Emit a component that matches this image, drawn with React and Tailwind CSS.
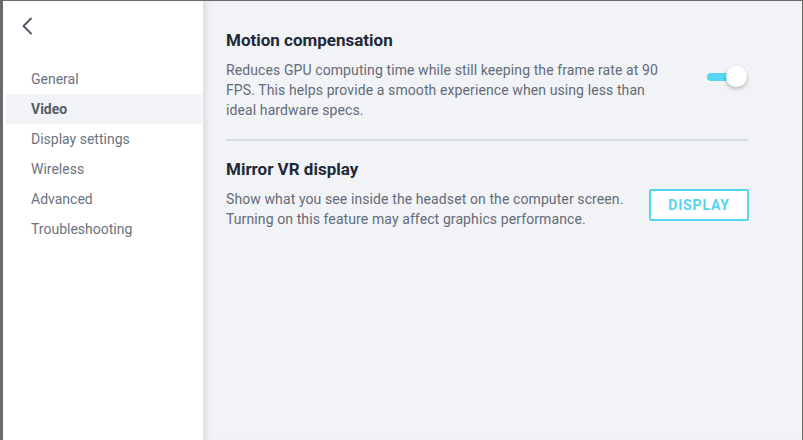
import React, { useState } from 'react';

const navItems = ['General', 'Video', 'Display settings', 'Wireless', 'Advanced', 'Troubleshooting'];

const App = () => {
  const [active, setActive] = useState('Video');
  const [motion, setMotion] = useState(true);

  return (
    <div
      className="flex h-[440px] w-[803px] overflow-hidden border-t border-r border-l-[3px] border-[#6a6a6a] bg-[#f2f3f7]"
      style={{ fontFamily: 'Roboto, "Liberation Sans", sans-serif' }}
    >
      {/* sidebar */}
      <div className="flex w-[200px] shrink-0 flex-col bg-white pl-[3px]">
        <button className="ml-[15px] mt-[15px] flex h-[20px] w-[14px] items-center text-[#4b5563]">
          <svg width="12" height="18" viewBox="0 0 12 18" fill="none">
            <path d="M10 1.5 L2.5 9 L10 16.5" stroke="currentColor" strokeWidth="1.8" strokeLinecap="round" strokeLinejoin="round" />
          </svg>
        </button>
        <nav className="mt-[28px] flex flex-col">
          {navItems.map((item) => (
            <button
              key={item}
              onClick={() => setActive(item)}
              className={`h-[30px] w-[196px] pl-[25px] text-left text-[14px] ${
                active === item ? 'bg-[#f2f3f7] font-bold text-[#555e68]' : 'text-[#6b7380]'
              }`}
            >
              {item}
            </button>
          ))}
        </nav>
      </div>

      {/* main */}
      <div className="relative flex-1 pl-[23px] pt-[27px] shadow-[inset_8px_0_8px_-6px_rgba(0,0,0,0.12)]">
        <div className="w-[522px]">
          <h2 className="text-[17px] font-bold leading-[25px] text-[#1f2937]">Motion compensation</h2>
          <div className="mt-[7px] flex items-start justify-between">
            <p className="w-[440px] text-[14px] leading-[20px] tracking-[0.1px] text-[#636b78]">
              Reduces GPU computing time while still keeping the frame rate at 90 FPS. This helps provide a smooth experience when using less than ideal hardware specs.
            </p>
            <button
              onClick={() => setMotion(!motion)}
              className="relative mr-[1px] mt-[6px] h-[22px] w-[40px]"
            >
              <span
                className={`absolute left-0 top-[7px] h-[8px] w-[30px] rounded-full ${
                  motion ? 'bg-[#55d6f2]' : 'bg-[#c9ced8]'
                }`}
              />
              <span
                className={`absolute top-0 h-[21px] w-[21px] rounded-full bg-white shadow-[0_2px_4px_rgba(0,0,0,0.25)] ${
                  motion ? 'left-[19px]' : 'left-0'
                }`}
              />
            </button>
          </div>
          <div className="mt-[19px] h-[2px] bg-[#d6dae2]" />

          <h2 className="mt-[16px] text-[17px] font-bold leading-[25px] text-[#1f2937]">Mirror VR display</h2>
          <div className="mt-[7px] flex items-start justify-between">
            <p className="text-[14px] leading-[20px] tracking-[0.1px] text-[#636b78]">
              Show what you see inside the headset on the computer screen.
              <br />
              Turning on this feature may affect graphics performance.
            </p>
            <button className="mr-[-1px] mt-0 h-[32px] w-[100px] rounded-[2px] border-2 border-[#55d6ee] bg-white text-[14px] font-bold tracking-[0.06em] text-[#55d6ee]">
              DISPLAY
            </button>
          </div>
        </div>
      </div>
    </div>
  );
};

export default App;
